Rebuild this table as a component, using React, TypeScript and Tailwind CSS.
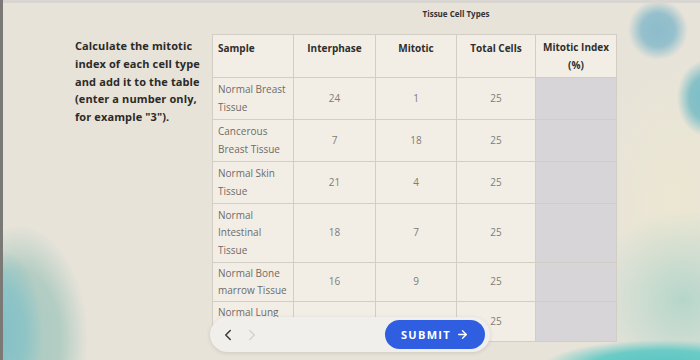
import { ArrowRight, ChevronLeft, ChevronRight } from 'lucide-react';

interface Row {
  sample: string[];
  interphase: string;
  mitotic: string;
  total: string;
  h: string;
}

const rows: Row[] = [
  { sample: ['Normal Breast', 'Tissue'], interphase: '24', mitotic: '1', total: '25', h: 'h-[42px]' },
  { sample: ['Cancerous', 'Breast Tissue'], interphase: '7', mitotic: '18', total: '25', h: 'h-[42px]' },
  { sample: ['Normal Skin', 'Tissue'], interphase: '21', mitotic: '4', total: '25', h: 'h-[42px]' },
  { sample: ['Normal', 'Intestinal', 'Tissue'], interphase: '18', mitotic: '7', total: '25', h: 'h-[59px]' },
  { sample: ['Normal Bone', 'marrow Tissue'], interphase: '16', mitotic: '9', total: '25', h: 'h-[39px]' },
  { sample: ['Normal Lung', 'Tissue'], interphase: '', mitotic: '', total: '25', h: 'h-[40px]' },
];

const cell = 'border border-[#d3cec5] px-[5px] py-0 align-middle';

export default function App() {
  return (
    <div
      className="relative w-[700px] h-[360px] overflow-hidden border-l-[3px] border-[#7b7976] bg-[#e7e3d9] bg-[radial-gradient(ellipse_40px_85px_at_0px_335px,#84c0c6_0%,#8fc4c6_55%,transparent_100%),radial-gradient(ellipse_70px_115px_at_15px_340px,#aacbc2_0%,#b3cdc3_60%,transparent_100%),radial-gradient(ellipse_30px_30px_at_655px_30px,#8dbccb_0%,#95c0cc_55%,transparent_100%),radial-gradient(ellipse_28px_38px_at_702px_98px,#7bbdc5_0%,#86c1c7_55%,transparent_100%),radial-gradient(ellipse_120px_26px_at_660px_366px,#58c4c2_0%,#6ccbc6_60%,transparent_100%),radial-gradient(ellipse_90px_90px_at_680px_300px,#b6d6cb_0%,transparent_100%),radial-gradient(ellipse_80px_150px_at_670px_200px,#ece7d2_0%,transparent_100%)] font-['Open_Sans',sans-serif] leading-[17.5px]"
    >
      <div className="h-[3px] bg-[#d9d6d1]" />

      <div className="flex pl-[72px]">
        <p className="w-[137px] mt-[34px] text-[11px] font-bold tracking-[0.01em] text-[#2b2a28] leading-[17.8px]">
          Calculate the mitotic index of each cell type and add it to the table (enter a number only, for example "3").
        </p>

        <div className="w-[488px]">
          <div className="h-[31px] pt-[3px] text-center text-[8px] font-bold text-[#333] leading-[16px]">
            Tissue Cell Types
          </div>

          <table className="w-[404px] table-fixed border-collapse bg-[#f2eee6] text-[10px]">
            <thead>
              <tr className="h-[43px]">
                <th className={`${cell} align-top pt-[5px] text-left font-bold text-[#2f2e2c] w-[81px]`}>Sample</th>
                <th className={`${cell} align-top pt-[5px] text-center font-bold text-[#2f2e2c] w-[82px]`}>Interphase</th>
                <th className={`${cell} align-top pt-[5px] text-center font-bold text-[#2f2e2c] w-[81px]`}>Mitotic</th>
                <th className={`${cell} align-top pt-[5px] text-center font-bold text-[#2f2e2c] w-[79px]`}>Total Cells</th>
                <th className={`${cell} align-top pt-[4px] text-center font-bold text-[#2f2e2c] w-[81px]`}>
                  Mitotic Index
                  <br />
                  (%)
                </th>
              </tr>
            </thead>
            <tbody className="text-[#6e6b66]">
              {rows.map((r) => (
                <tr key={r.sample.join(' ')} className={r.h}>
                  <td className={`${cell} text-left`}>
                    {r.sample.map((line) => (
                      <div key={line}>{line}</div>
                    ))}
                  </td>
                  <td className={`${cell} text-center text-[#807c76]`}>{r.interphase}</td>
                  <td className={`${cell} text-center text-[#807c76]`}>{r.mitotic}</td>
                  <td className={`${cell} text-center text-[#807c76]`}>{r.total}</td>
                  <td className={`${cell} bg-[#d8d5d9]`} />
                </tr>
              ))}
            </tbody>
          </table>
        </div>
      </div>

      {/* bottom nav, lies over the table */}
      <div className="absolute left-[207px] top-[317px] w-[280px] h-[35px] rounded-full bg-[#f1efec] shadow-[0_1px_4px_rgba(0,0,0,0.12)] flex items-center pl-[9px] pr-[5px]">
        <ChevronLeft size={18} strokeWidth={2} className="text-[#3a3a3a]" />
        <ChevronRight size={18} strokeWidth={2} className="ml-[6px] text-[#d5d3cf]" />
        <button className="ml-auto h-[29px] w-[100px] rounded-full bg-[#2f5fe0] text-white text-[11px] font-bold tracking-[0.12em] flex items-center justify-center gap-[5px]">
          SUBMIT
          <ArrowRight size={13} strokeWidth={2.5} />
        </button>
      </div>
    </div>
  );
}
